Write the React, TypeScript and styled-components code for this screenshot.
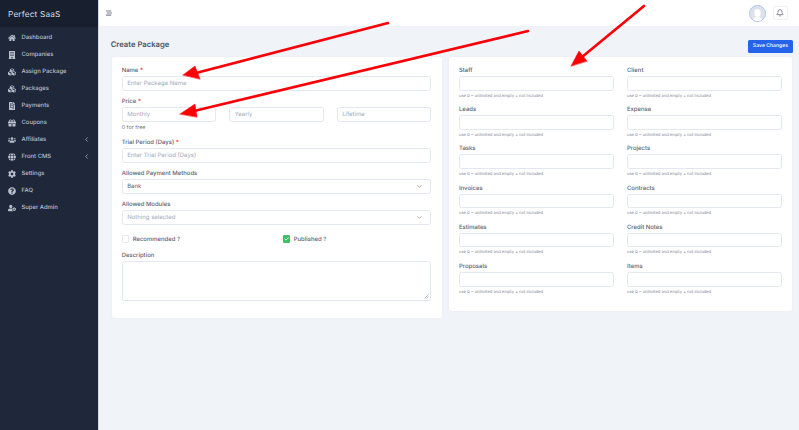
import React from "react";
import styled, { createGlobalStyle } from "styled-components";
import { ChevronDown, ChevronLeft, Bell, Check } from "lucide-react";
import { FaHome, FaBuilding, FaCubes, FaFileInvoice, FaGift, FaUsers, FaGlobe, FaCog, FaQuestionCircle, FaUserCog, FaStream } from "react-icons/fa";

const Global = createGlobalStyle`
  html, body { margin: 0; padding: 0; height: 100%; overflow: hidden; }
  * { box-sizing: border-box; text-rendering: geometricPrecision; }
  body { font-family: Inter, "Liberation Sans", sans-serif; background: #f0f3f8; }
`;

const Page = styled.div`
  position: relative;
  display: flex;
  width: 799px;
  height: 430px;
  overflow: hidden;
`;

const Sidebar = styled.aside`
  width: 98.5px;
  flex: none;
  background: #1f283b;
  border-right: 1px solid #d5dae3;
`;

const Brand = styled.div`
  height: 27px;
  background: #18202f;
  color: #d9dde4;
  font-size: 8.2px;
  font-weight: 400;
  letter-spacing: 0.2px;
  padding-left: 8px;
  display: flex;
  align-items: center;
`;

const Menu = styled.nav`
  display: flex;
  flex-direction: column;
  padding-top: 2px;
`;

const MenuItem = styled.div`
  height: 17.05px;
  display: flex;
  align-items: center;
  padding: 0 7.5px 0 8px;
  color: #b9bfcb;
  font-size: 5.9px;
  font-weight: 500;
`;

const MenuIcon = styled.span`
  width: 13.5px;
  display: flex;
  align-items: center;
  color: #b9bfcb;
  font-size: 8px;
`;

const MenuLabel = styled.span`
  flex: 1;
`;

const TopIcon = styled(FaStream)`
  color: #7b8492;
  font-size: 6px;
`;

const Main = styled.main`
  flex: 1;
  min-width: 0;
  display: flex;
  flex-direction: column;
`;

const TopBar = styled.header`
  height: 26px;
  background: #fff;
  display: flex;
  align-items: center;
  justify-content: space-between;
  padding: 0 11px 0 7px;
`;

const TopActions = styled.div`
  display: flex;
  align-items: center;
  gap: 6.5px;
`;

const Avatar = styled.div`
  width: 17px;
  height: 17px;
  border-radius: 50%;
  border: 1px solid #a9c3ee;
  background: #dde2ea;
  overflow: hidden;
`;

const BellBox = styled.div`
  width: 15.5px;
  height: 13.5px;
  border: 1px solid #eef0f4;
  border-radius: 2px;
  display: flex;
  align-items: center;
  justify-content: center;
  color: #4a5260;
`;

const Content = styled.div`
  padding: 14px 6px 0 13.2px;
`;

const TitleRow = styled.div`
  display: flex;
  align-items: flex-start;
  justify-content: space-between;
  height: 17px;
`;

const Title = styled.h1`
  margin: 0 0 0 -1px;
  font-size: 7.7px;
  line-height: 10px;
  font-weight: 600;
  color: #4d5565;
`;

const SaveButton = styled.button`
  width: 45px;
  height: 12.5px;
  padding: 0;
  border: none;
  border-radius: 1.5px;
  background: #2563eb;
  color: #eef3fe;
  font: 600 5.1px Inter, sans-serif;
`;

const Columns = styled.div`
  display: grid;
  grid-template-columns: 330px 343.6px;
  gap: 7px;
  align-items: start;
`;

const Card = styled.section<{ $height: number }>`
  background: #fff;
  border-radius: 2px;
  height: ${(p) => p.$height}px;
  box-shadow: 0 0 1px rgba(120, 130, 150, 0.2);
`;

const LeftBody = styled.div`
  display: flex;
  flex-direction: column;
  padding: 9px 10.5px 0 10px;
`;

const Label = styled.label<{ $gap?: number }>`
  display: block;
  height: 10px;
  line-height: 9px;
  font-size: 5.95px;
  font-weight: 500;
  color: #5a6271;
  margin-top: ${(p) => p.$gap ?? 0}px;
`;

const Req = styled.span`
  color: #e33b3b;
`;

const Input = styled.input`
  display: block;
  width: 100%;
  height: 14.7px;
  padding: 0 4.5px;
  border: 1px solid #e3e7ef;
  border-radius: 2.5px;
  background: #fff;
  font: 400 6px Inter, sans-serif;
  outline: none;
  &::placeholder { color: #a2aaba; opacity: 1; }
`;

const PriceRow = styled.div`
  display: grid;
  grid-template-columns: repeat(3, 1fr);
  gap: 13px;
`;

const FreeNote = styled.div`
  height: 10px;
  margin-top: 1px;
  line-height: 10px;
  font-size: 5.4px;
  color: #6b7382;
`;

const Select = styled.div<{ $muted?: boolean }>`
  height: 14.7px;
  padding: 0 7px 0 4.5px;
  border: 1px solid #e3e7ef;
  border-radius: 2.5px;
  display: flex;
  align-items: center;
  justify-content: space-between;
  font-size: 6px;
  color: ${(p) => (p.$muted ? "#a2aaba" : "#5a6271")};
`;

const CheckRow = styled.div`
  display: grid;
  grid-template-columns: 161px 1fr;
  height: 8px;
  margin-top: 10.5px;
`;

const CheckItem = styled.div`
  display: flex;
  align-items: center;
  gap: 3.5px;
  font-size: 5.95px;
  font-weight: 500;
  color: #5a6271;
`;

const Box = styled.span<{ $on?: boolean }>`
  width: 7.5px;
  height: 7.5px;
  border-radius: 1px;
  border: 1px solid ${(p) => (p.$on ? "#3cc063" : "#e6e9ef")};
  background: ${(p) => (p.$on ? "#3cc063" : "#fff")};
  display: flex;
  align-items: center;
  justify-content: center;
  color: #fff;
`;

const TextArea = styled.div`
  position: relative;
  height: 40.5px;
  border: 1px solid #e3e7ef;
  border-radius: 2.5px;
`;

const Grip = styled.svg`
  position: absolute;
  right: 1px;
  bottom: 1px;
`;

const LimitGrid = styled.div`
  display: grid;
  grid-template-columns: 155px 155px;
  column-gap: 13px;
  padding: 9px 0 0 10.3px;
`;

const LimitField = styled.div`
  height: 39.2px;
`;

const Hint = styled.div`
  font-size: 4.1px;
  height: 8px;
  line-height: 9px;
  color: #7b8391;
`;

const Arrows = styled.svg`
  position: absolute;
  inset: 0;
  pointer-events: none;
`;

const menu = [
  { label: "Dashboard", icon: <FaHome /> },
  { label: "Companies", icon: <FaBuilding /> },
  { label: "Assign Package", icon: <FaCubes /> },
  { label: "Packages", icon: <FaCubes /> },
  { label: "Payments", icon: <FaFileInvoice /> },
  { label: "Coupons", icon: <FaGift /> },
  { label: "Affiliates", icon: <FaUsers />, sub: true },
  { label: "Front CMS", icon: <FaGlobe />, sub: true },
  { label: "Settings", icon: <FaCog /> },
  { label: "FAQ", icon: <FaQuestionCircle /> },
  { label: "Super Admin", icon: <FaUserCog /> },
];

const limits = ["Staff", "Client", "Leads", "Expense", "Tasks", "Projects", "Invoices", "Contracts", "Estimates", "Credit Notes", "Proposals", "Items"];

export default function App() {
  return (
    <Page>
      <Global />
      <Sidebar>
        <Brand>Perfect SaaS</Brand>
        <Menu>
          {menu.map((m) => (
            <MenuItem key={m.label}>
              <MenuIcon>{m.icon}</MenuIcon>
              <MenuLabel>{m.label}</MenuLabel>
              {m.sub && <ChevronLeft size={7} strokeWidth={2.5} />}
            </MenuItem>
          ))}
        </Menu>
      </Sidebar>
      <Main>
        <TopBar>
          <TopIcon />
          <TopActions>
            <Avatar>
              <svg width="15" height="15" viewBox="0 0 15 15">
                <rect width="15" height="15" fill="#dde2ea" />
                <ellipse cx="7.5" cy="6" rx="3.2" ry="4" fill="#fff" />
                <path d="M2.5 15c0-4 2-5 5-5s5 1 5 5z" fill="#fff" />
              </svg>
            </Avatar>
            <BellBox>
              <Bell size={8} strokeWidth={2} />
            </BellBox>
          </TopActions>
        </TopBar>
        <Content>
          <TitleRow>
            <Title>Create Package</Title>
            <SaveButton>Save Changes</SaveButton>
          </TitleRow>
          <Columns>
            <Card $height={261}>
              <LeftBody>
                <Label>Name <Req>*</Req></Label>
                <Input placeholder="Enter Package Name" />
                <Label $gap={6.3}>Price <Req>*</Req></Label>
                <PriceRow>
                  <Input placeholder="Monthly" />
                  <Input placeholder="Yearly" />
                  <Input placeholder="Lifetime" />
                </PriceRow>
                <FreeNote>0 for free</FreeNote>
                <Label $gap={5.2}>Trial Period (Days) <Req>*</Req></Label>
                <Input placeholder="Enter Trial Period (Days)" />
                <Label $gap={6.3}>Allowed Payment Methods</Label>
                <Select>Bank<ChevronDown size={7} color="#6b7280" /></Select>
                <Label $gap={6.3}>Allowed Modules</Label>
                <Select $muted>Nothing selected<ChevronDown size={7} color="#6b7280" /></Select>
                <CheckRow>
                  <CheckItem><Box />Recommended ?</CheckItem>
                  <CheckItem><Box $on><Check size={6} strokeWidth={4} /></Box>Published ?</CheckItem>
                </CheckRow>
                <Label $gap={7.7}>Description</Label>
                <TextArea>
                  <Grip width="5" height="5" viewBox="0 0 5 5">
                    <path d="M0.5 4.5L4.5 0.5M2.5 4.5L4.5 2.5" stroke="#8c93a0" strokeWidth="0.6" />
                  </Grip>
                </TextArea>
              </LeftBody>
            </Card>
            <Card $height={254}>
              <LimitGrid>
                {limits.map((l) => (
                  <LimitField key={l}>
                    <Label>{l}</Label>
                    <Input />
                    <Hint>use 0 = unlimited and empty = not included</Hint>
                  </LimitField>
                ))}
              </LimitGrid>
            </Card>
          </Columns>
        </Content>
      </Main>
      <Arrows width="799" height="430" viewBox="0 0 799 430">
        <g fill="#fb0007" stroke="#fb0007" strokeLinecap="round">
          <path d="M388 23L196 73" strokeWidth="2.6" />
          <path d="M183 75L195 66L200 79Z" strokeWidth="0.5" />
          <path d="M528 31L194 111" strokeWidth="2.6" />
          <path d="M180 114L195 104L197 117Z" strokeWidth="0.5" />
          <path d="M644 6L582 57" strokeWidth="2.6" />
          <path d="M571 66L579 51L587 61Z" strokeWidth="0.5" />
        </g>
      </Arrows>
    </Page>
  );
}
